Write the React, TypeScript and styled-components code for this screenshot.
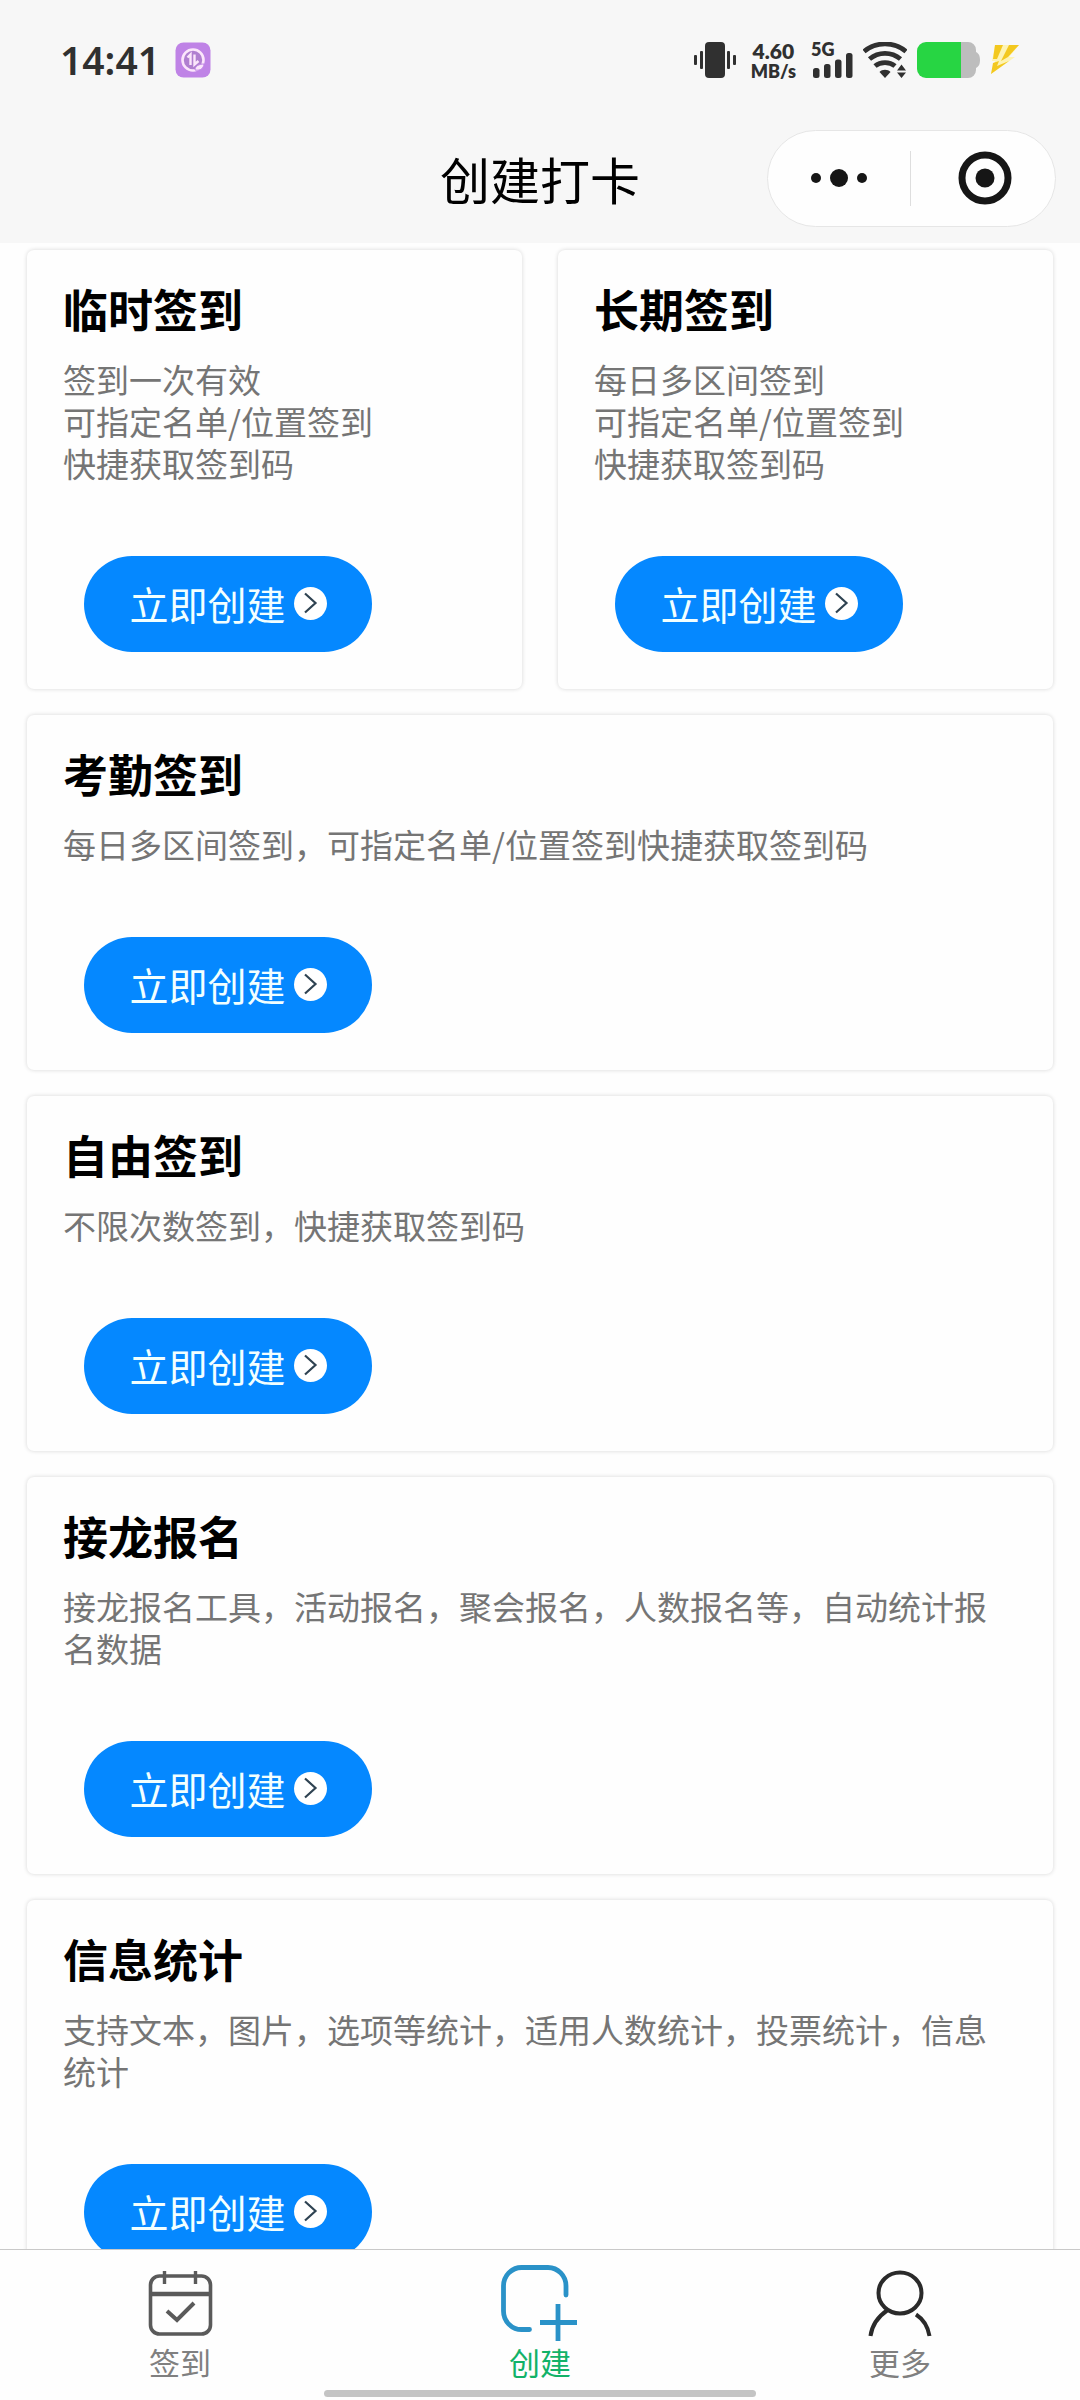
import React from 'react';
import styled, { createGlobalStyle } from 'styled-components';

const GlobalStyle = createGlobalStyle`
  *, *::before, *::after { box-sizing: border-box; }
  html, body, #root { height: 100%; }
  body {
    margin: 0;
    background: #fefefe;
    color: #000;
    font-family: "Noto Sans CJK SC", "Noto Sans", sans-serif;
  }
  h1, h2, p { margin: 0; }
  button { font: inherit; border: 0; padding: 0; cursor: pointer; }
`;

const Screen = styled.div`
  height: 100vh;
  display: flex;
  flex-direction: column;
`;

const Header = styled.header`
  flex: none;
  background: #f7f7f7;
`;

const StatusBar = styled.div`
  display: flex;
  align-items: center;
  justify-content: space-between;
  height: 120px;
  padding: 0 60px;
  color: #303030;
  font-family: "Noto Sans", "Open Sans", sans-serif;
`;

const StatusGroup = styled.div<{ $gap: number }>`
  display: flex;
  align-items: center;
  gap: ${(p) => p.$gap}px;
`;

const Clock = styled.time`
  font-size: 39px;
  line-height: 40px;
  font-weight: 600;
`;

const NetSpeed = styled.div`
  display: flex;
  flex-direction: column;
  align-items: center;
  font-family: Lato, "Noto Sans", sans-serif;
  font-weight: 800;
  font-size: 18px;
  line-height: 18px;
`;

const SpeedValue = styled.span`
  font-size: 21px;
  line-height: 22px;
`;

const Signal = styled.div`
  position: relative;
  width: 42px;
  height: 36px;
  display: flex;
`;

const SignalLabel = styled.span`
  position: absolute;
  top: 0;
  left: 0;
  font-family: Lato, "Noto Sans", sans-serif;
  font-size: 18px;
  line-height: 14px;
  font-weight: 800;
`;

const NavBar = styled.div`
  display: grid;
  grid-template-columns: 1fr auto 1fr;
  align-items: center;
  height: 123px;
  padding: 0 24px 7px;
`;

const PageTitle = styled.h1`
  grid-column: 2;
  font-size: 50px;
  line-height: 60px;
  font-weight: 400;
`;

const Capsule = styled.div`
  justify-self: end;
  display: flex;
  align-items: center;
  width: 289px;
  height: 97px;
  border: 1px solid #e6e6e6;
  border-radius: 49px;
  background: #fefefe;
`;

const CapsuleButton = styled.button`
  flex: 1;
  height: 100%;
  display: flex;
  align-items: center;
  justify-content: center;
  background: none;

  & + & {
    position: relative;
    padding-left: 5px;
  }

  & + &::before {
    content: "";
    position: absolute;
    left: 1px;
    top: 20px;
    bottom: 20px;
    width: 1px;
    background: #dedede;
  }
`;

const Content = styled.main`
  flex: 1;
  min-height: 0;
  overflow-y: auto;
  scrollbar-width: none;
  display: grid;
  grid-template-columns: 1fr 1fr;
  align-content: start;
  gap: 26px 36px;
  padding: 7px 27px 26px;
`;

const Card = styled.section<{ $wide: boolean }>`
  grid-column: ${(p) => (p.$wide ? '1 / -1' : 'auto')};
  padding: 37px 36px;
  border-radius: 7px;
  background: #fefefe;
  box-shadow: 0 0 4px rgba(0, 0, 0, 0.16);
`;

const CardTitle = styled.h2`
  font-size: 45px;
  line-height: 44px;
  font-weight: 700;
`;

const CardText = styled.p`
  margin: 27px 0 72px;
  font-size: 33px;
  line-height: 42px;
  font-weight: 400;
  color: #757575;
  white-space: pre-line;
`;

const CreateButton = styled.button`
  display: flex;
  align-items: center;
  justify-content: center;
  gap: 8px;
  width: 288px;
  height: 96px;
  margin-left: 21px;
  padding-bottom: 2px;
  border-radius: 48px;
  background: #0588ff;
  color: #f2ffff;
  font-size: 39px;
  line-height: 48px;
`;

const TabBar = styled.nav`
  position: relative;
  flex: none;
  display: grid;
  grid-template-columns: repeat(3, 1fr);
  height: 151px;
  border-top: 1px solid #c9c9c9;
  background: #fefefe;

  &::after {
    content: "";
    position: absolute;
    left: 30%;
    bottom: 3px;
    width: 40%;
    height: 7px;
    border-radius: 4px;
    background: #c4c4c4;
  }
`;

const Tab = styled.a<{ $active: boolean }>`
  display: flex;
  flex-direction: column;
  align-items: center;
  padding-top: 12px;
  color: ${(p) => (p.$active ? '#12b268' : '#808080')};
  text-decoration: none;
  font-size: 31px;
  line-height: 32px;
`;

const SaverIcon = () => (
  <svg width="36" height="36" viewBox="0 0 36 36" aria-hidden="true">
    <rect x="0.5" y="0.5" width="35" height="35" rx="8" fill="#bf83e6" />
    <circle cx="18" cy="18" r="10.5" fill="#b07fd0" stroke="#fbe6fb" strokeWidth="2.6" />
    <path d="M12.5 15.5 15.5 12.5V23M19.5 12.5V22.5L23.5 19" fill="none" stroke="#fbe6fb" strokeWidth="2.4" />
    <path d="M20 28c0-4 4-6 9-6-.5 4-3 7-9 6z" fill="#fbe6fb" stroke="#bf83e6" />
  </svg>
);

const VibrateIcon = () => (
  <svg width="42" height="36" viewBox="0 0 42 36" fill="#303030" aria-hidden="true">
    <rect x="11" y="0" width="20" height="36" rx="4" />
    <rect x="0" y="13" width="3" height="10" rx="1" />
    <rect x="6" y="9" width="3" height="18" rx="1" />
    <rect x="33" y="9" width="3" height="18" rx="1" />
    <rect x="39" y="13" width="3" height="10" rx="1" />
  </svg>
);

const SignalBars = () => (
  <svg width="42" height="36" viewBox="0 0 42 36" fill="#303030" aria-hidden="true">
    <rect x="2" y="26" width="6.5" height="10" rx="2.5" />
    <rect x="13" y="22" width="6.5" height="14" rx="2.5" />
    <rect x="24" y="17.5" width="6.5" height="18.5" rx="2.5" />
    <rect x="35" y="11" width="6.5" height="25" rx="2.5" />
  </svg>
);

const WifiIcon = () => (
  <svg width="44" height="36" viewBox="0 0 44 36" aria-hidden="true">
    <g fill="none" stroke="#303030" strokeWidth="4.8">
      <path d="M1 9.5C13-.6 31-.6 43 9.5" />
      <path d="M6.5 17c9-7.6 22-7.6 31 0" />
      <path d="M12 24c5.5-4.6 14.5-4.6 20 0" />
    </g>
    <g fill="#303030">
      <path d="M16.5 30c2.5-3 8.5-3 11 0L22 36z" />
      <path d="M34 28.5l4.5-6 4.5 6zM34 30.5h9l-4.5 5.5z" />
    </g>
  </svg>
);

const BatteryIcon = () => (
  <svg width="63" height="36" viewBox="0 0 63 36" aria-hidden="true">
    <path d="M44 0h7a8 8 0 0 1 8 8v2c2.6 1.4 4 3.5 4 8s-1.4 6.6-4 8v2a8 8 0 0 1-8 8h-7z" fill="#bdbdbd" />
    <path d="M9 0h35v36H9a9 9 0 0 1-9-9V9a9 9 0 0 1 9-9z" fill="#27d543" />
  </svg>
);

const BoltIcon = () => (
  <svg width="30" height="30" viewBox="0 0 30 30" aria-hidden="true">
    <path d="M5 0H29L19 12H25L1 29L5 16H2z" fill="#fdf3b4" />
    <path d="M5 0h8L7 14H3z" fill="#f3c81f" />
    <path d="M19 0h10L18 12l-7 4z" fill="#f3c81f" />
    <path d="M3 18l6-2-2 5 12-5L1 29z" fill="#f3c81f" />
  </svg>
);

const MoreDots = () => (
  <svg width="58" height="20" viewBox="0 0 58 20" fill="#161616" aria-hidden="true">
    <circle cx="6" cy="10" r="5" />
    <circle cx="29" cy="10" r="9" />
    <circle cx="52" cy="10" r="5" />
  </svg>
);

const TargetIcon = () => (
  <svg width="54" height="54" viewBox="0 0 54 54" aria-hidden="true">
    <circle cx="27" cy="27" r="23" fill="none" stroke="#161616" strokeWidth="7" />
    <circle cx="27" cy="27" r="9.5" fill="#161616" />
  </svg>
);

const ArrowBadge = () => (
  <svg width="33" height="33" viewBox="0 0 33 33" aria-hidden="true">
    <circle cx="16.5" cy="16.5" r="16.5" fill="#fff" />
    <path d="M11 6.5 21.5 16 11 25.5" fill="none" stroke="#2f4352" strokeWidth="2.2" />
  </svg>
);

const CheckinIcon = () => (
  <svg width="80" height="84" viewBox="0 0 80 84" fill="none" stroke="#5a5a5a" aria-hidden="true">
    <rect x="10.5" y="14" width="60" height="58" rx="9" strokeWidth="3.6" />
    <path d="M11 32h59" strokeWidth="4.4" />
    <path d="M24.5 9v13M55.5 9v13" strokeWidth="3.4" />
    <path d="M27 49l10 9 17-17" strokeWidth="4" />
  </svg>
);

const CreateIcon = () => (
  <svg width="80" height="84" viewBox="0 0 80 84" fill="none" stroke="#2a92c8" strokeWidth="4.8" aria-hidden="true">
    <path d="M66 33V24A18 18.5 0 0 0 48 5.5H21.5A18 18.5 0 0 0 3.5 24v25A18 18.5 0 0 0 21.5 67.5h8" strokeLinecap="round" />
    <path d="M58 42v37M40 60.5h37" />
  </svg>
);

const PersonIcon = () => (
  <svg width="80" height="84" viewBox="0 0 80 84" fill="none" stroke="#2a2a2a" strokeWidth="4" aria-hidden="true">
    <ellipse cx="40" cy="31" rx="21.5" ry="20.5" />
    <path d="M10.5 74C12 63 19 54 27 48.5M56 52.5C63 57 68 65 69.5 74" />
  </svg>
);

const cards = [
  { title: '临时签到', text: '签到一次有效\n可指定名单/位置签到\n快捷获取签到码', wide: false },
  { title: '长期签到', text: '每日多区间签到\n可指定名单/位置签到\n快捷获取签到码', wide: false },
  { title: '考勤签到', text: '每日多区间签到，可指定名单/位置签到快捷获取签到码', wide: true },
  { title: '自由签到', text: '不限次数签到，快捷获取签到码', wide: true },
  { title: '接龙报名', text: '接龙报名工具，活动报名，聚会报名，人数报名等，自动统计报名数据', wide: true },
  { title: '信息统计', text: '支持文本，图片，选项等统计，适用人数统计，投票统计，信息统计', wide: true },
];

const tabs = [
  { label: '签到', Icon: CheckinIcon, active: false },
  { label: '创建', Icon: CreateIcon, active: true },
  { label: '更多', Icon: PersonIcon, active: false },
];

export default function App() {
  return (
    <Screen>
      <GlobalStyle />
      <Header>
        <StatusBar>
          <StatusGroup $gap={15}>
            <Clock>14:41</Clock>
            <SaverIcon />
          </StatusGroup>
          <StatusGroup $gap={10}>
            <StatusGroup $gap={15}>
              <VibrateIcon />
              <NetSpeed>
                <SpeedValue>4.60</SpeedValue>
                <span>MB/s</span>
              </NetSpeed>
              <Signal>
                <SignalLabel>5G</SignalLabel>
                <SignalBars />
              </Signal>
            </StatusGroup>
            <WifiIcon />
            <BatteryIcon />
            <BoltIcon />
          </StatusGroup>
        </StatusBar>
        <NavBar>
          <PageTitle>创建打卡</PageTitle>
          <Capsule>
            <CapsuleButton type="button" aria-label="更多操作">
              <MoreDots />
            </CapsuleButton>
            <CapsuleButton type="button" aria-label="关闭">
              <TargetIcon />
            </CapsuleButton>
          </Capsule>
        </NavBar>
      </Header>
      <Content>
        {cards.map((card) => (
          <Card key={card.title} $wide={card.wide}>
            <CardTitle>{card.title}</CardTitle>
            <CardText>{card.text}</CardText>
            <CreateButton type="button">
              立即创建
              <ArrowBadge />
            </CreateButton>
          </Card>
        ))}
      </Content>
      <TabBar>
        {tabs.map(({ label, Icon, active }) => (
          <Tab key={label} href="#" $active={active} aria-current={active ? 'page' : undefined}>
            <Icon />
            {label}
          </Tab>
        ))}
      </TabBar>
    </Screen>
  );
}
